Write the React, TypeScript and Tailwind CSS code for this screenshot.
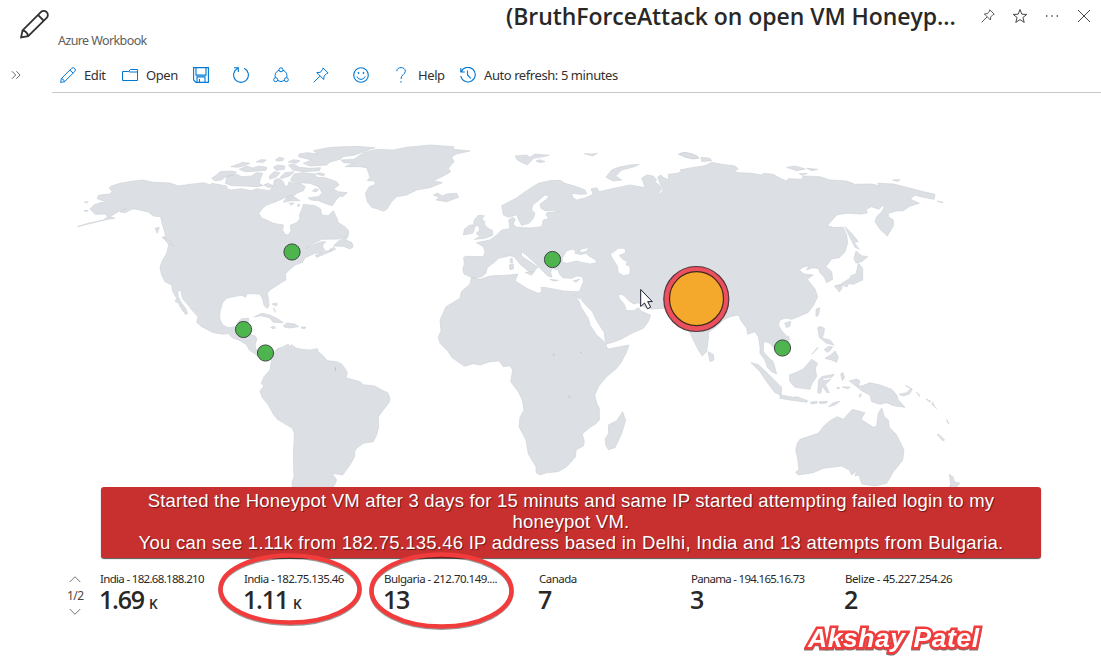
import type { ReactNode } from "react";

type Section = [number, number, string];

/** Joins coastline sections, each given in the local units of its map sheet. */
function coast(...sections: Section[]): string {
  const points = sections.flatMap(([dx, dy, text]) =>
    text
      .trim()
      .split(/\s+/)
      .map((pair) => {
        const [x, y] = pair.split(",").map(Number);
        return `${x + dx},${y + dy}`;
      }),
  );
  return `M${points.join("L")}Z`;
}

const sheet = (dx: number, dy: number, ...shapes: string[]) =>
  shapes.map((s) => coast([dx, dy, s])).join("");

const AMERICAS = coast(
  [210, 420, "22,260 50,251 100,240 112,231 108,222 75,223 60,207 72,195 90,188 112,187 82,176 85,166 118,162 127,156 118,145 122,139 150,130 190,123 218,120 250,127 300,129 325,138 360,133 400,128 420,134 425,130 470,138 472,147 485,150 515,146 545,152 560,146 598,152 610,137 613,120 627,115 640,125 645,140 655,135 657,125 668,130 690,130 706,140 700,152 680,160 662,178 650,170 640,175 618,185 590,195 576,207 567,220 575,235 590,240 610,250 640,255 638,270 645,283 655,285 663,272 661,256 680,248 690,235 688,225 697,205 700,193 735,197 752,207 755,225 775,227 790,212 803,240 805,248 825,260 836,272 835,285 805,297 755,298 735,308 708,325 750,306 768,305 760,312 758,320 765,333 787,332 765,342 740,352 736,346 755,338 735,340 705,353 698,367 675,375 658,390 646,402 648,420 640,424 600,450 592,460 596,480 597,500 590,505 582,495 577,475 570,463 550,461 530,462 527,472 515,466 490,470 470,475 458,488 450,515 449,535 458,555 475,563 500,560 505,545 515,536 537,535 535,545 530,580 555,588 560,595"],
  [720, 960, "50,60 45,75 48,88 56,96 75,94 103,98 112,86 130,80 145,72 148,80 155,74 168,84 185,88 210,90 232,86 235,95 250,108 262,122 290,125 305,132 318,150 322,160 318,173 335,178 360,185 370,194 405,198 425,210 443,218 450,235 447,248 430,270 415,290 416,320 410,345 400,365 370,370 350,385 344,395 344,410 330,435 308,465 276,460 290,480 285,493 265,520 240,560 180,640 160,520 156,490 162,470 160,410 163,340 157,325 112,298 100,283 85,255 65,230 60,212 72,198 64,190 72,170 90,150 94,125 94,115 80,108 65,110 50,106 40,98 28,90 20,75 5,65"],
  [210, 420, "510,602 485,592 475,580 460,583 430,578 395,560 380,547 384,530 370,515 350,490 337,475 333,452 323,452 325,470 335,490 347,505 353,520 347,524 330,500 326,490 315,484 320,475 308,455 305,435 285,425 275,405 270,385 275,365 290,340 296,315 290,303 278,293 287,288 280,262 276,250 272,230 250,228 235,216 195,207 185,208 165,218 150,216 170,204 145,215 120,230 135,235 112,238"],
);

const OLD_WORLD = coast(
  [1290, 420, "103,403 98,390 103,372 101,352 108,349 160,350 165,335 160,320 140,308 160,304 180,300 200,285 215,270 240,266 236,240 248,232 256,238 250,252 260,262 300,264 335,260 340,240 357,236 348,225 352,217 388,215 370,211 345,212 333,205 330,192 345,182 358,168 345,165 325,182 308,195 305,210 315,220 310,235 297,250 275,256 266,240 260,224 235,232 220,225 215,197 235,187 258,175 290,152 325,130 360,122 390,121 405,130 440,140 465,150 470,162 450,163 425,160 428,172 440,180 465,174 490,163 483,147 500,143 508,155 530,150 560,143 600,135 645,143 640,127 635,115 650,105 670,108 680,120 675,125 690,137 695,148 686,158 690,161 700,150 690,130 683,112 692,105 700,112 715,120 715,103 742,100 758,92"],
  [2040, 420, "0,90 30,84 75,77 95,67 125,73 165,78 175,87 160,95 180,98 215,100 245,105 250,100 280,103 300,115 320,123 325,116 365,118 370,108 420,110 450,120 500,123 525,133 575,132 600,138 593,130 640,132 700,147 730,155 765,163 762,178 730,172 705,166 690,177 718,190 690,198 670,212 650,213 625,220 625,230 640,240 640,258 622,288 600,268 585,245 590,230 605,215 612,203 608,195 597,208 575,200 558,208 562,219 545,222 500,220 470,225 455,242 442,257 460,262 490,262 500,285 503,310 495,335 478,353 455,357 438,380 455,395 458,418 440,428 433,412 420,398 415,385 395,384 380,390 386,377 368,382 358,390 372,402 400,405 382,418 405,447 413,470 400,497 385,517 355,530 335,538 318,534 300,540 295,555 305,572 322,590"],
  [2040, 900, "326,107 328,125 310,150 285,148 270,130 252,124 250,140 250,155 268,175 280,185 290,222 275,215 262,202 255,180 240,160 240,140 235,110 225,95 203,103 200,85 185,65 175,45 150,50 130,60 115,75 85,97 85,115 80,155 67,168 55,150 40,120 30,98 20,80 0,60"],
  [1290, 420, "745,525 700,505 665,507 640,500 625,488 612,492 600,485 580,465 565,463 568,475 582,492 590,512 612,512 625,503 637,515 662,525 655,545 640,565 605,580"],
  [1290, 900, "575,117 545,128 530,131 525,120 523,98 500,62 487,35 465,13"],
  [1290, 420, "455,480 456,468 449,478 434,465 447,485 455,505 475,535"],
  [1290, 900, "480,75 500,105 530,132 528,138 535,147 597,135 590,155 575,185 560,205 530,230 507,257 494,285 500,310 508,325 508,360 497,372 480,382 457,402 463,425 460,438 438,450 437,470 410,500 385,515 350,518 330,525 318,518 318,500 295,462 288,420 267,380 270,352 282,330 277,300 265,275 242,245 248,210 240,197 220,200 207,183 180,185 150,195 130,191 103,199 65,172 55,155 30,130 25,112 33,92 30,60 48,20"],
  [1290, 420, "65,490 90,475 94,455 120,432 124,412 150,418 180,408 240,405 264,402 255,422 290,445 325,460 335,455 333,442 350,443 400,453 448,455 460,425 458,410 440,408 425,415 398,413 388,402 385,390 365,385 362,398 366,412 352,407 335,390 322,375 285,342 274,335 275,348 295,362 325,382 318,386 312,397 297,395 270,372 252,350 240,347 205,355 195,365 172,383 168,400 155,410 130,414"],
);

const INLAND_WATER = sheet(
  1290,
  420,
  "396,366 398,352 410,332 425,328 437,331 435,340 452,344 468,340 480,350 497,360 500,368 480,372 460,368 440,363 410,370",
  "446,330 476,322 470,334 455,337",
  "541,343 565,325 585,325 587,338 568,346 578,358 592,365 588,375 600,378 600,403 580,407 565,398 562,378 550,360",
);

const ISLANDS = [
  sheet(
    210,
    420,
    "425,115 440,105 450,95 480,93 500,96 490,105 465,112 455,120 435,122",
    "466,130 472,108 500,103 515,110 545,108 560,98 578,100 572,115 567,130 580,137 560,140 520,138 485,137",
    "483,80 505,72 517,67 540,70 525,76 505,82",
    "508,88 530,78 548,84 568,78 590,82 588,91 550,94 525,95",
    "558,66 572,59 589,60 580,67",
    "610,82 622,75 645,78 643,88 618,91",
    "616,60 627,52 642,55 638,62 622,63",
    "598,108 612,95 630,98 620,110 600,118",
    "582,135 595,130 610,138 597,143",
    "630,112 645,98 672,95 660,107 635,116",
    "656,75 670,72 688,82 720,85 752,83 748,92 700,95 668,90",
    "655,66 670,59 690,62 678,70",
    "662,118 672,102 700,98 735,102 740,112 765,113 800,125 807,135 790,147 805,155 832,158 818,170 810,168 798,180 787,197 770,192 745,182 722,180 715,173 745,170 757,158 745,140 720,130 690,128 665,125",
    "737,101 750,98 764,102 760,108",
    "640,187 650,172 660,166 678,174 690,182 665,182",
    "657,190 672,189 665,195",
    "682,194 690,193 685,201",
    "727,153 735,146 746,149 738,156",
    "790,318 805,304 822,292 835,288 827,300 845,307 850,320 840,327 820,319",
    "778,329 792,322 797,328 780,334",
    "276,291 295,298 312,318 295,310",
    "255,265 268,262 262,280",
    "43,186 55,185 50,189",
    "42,211 55,212 48,215",
    "552,531 575,520 600,525 625,538 640,548 610,547 598,533 572,527",
    "640,558 650,549 675,552 686,560 660,564 645,562",
    "602,562 610,559 617,564 608,566",
    "694,561 708,561 704,566 695,565",
    "606,492 620,489 622,494 618,498",
    "610,504 614,508 616,517",
  ),
  sheet(
    690,
    420,
    "205,50 208,42 230,38 265,42 250,32 300,22 380,19 435,23 400,35 375,45 340,50 330,58 300,66 290,75 240,78 220,70 245,60 225,55",
    "333,60 372,58 400,38 440,28 490,30 530,22 600,15 672,20 670,28 720,33 680,42 665,50 672,65 655,85 662,95 640,108 610,122 637,128 600,143 560,150 530,165 500,170 485,185 470,208 460,214 445,208 425,202 412,185 406,160 418,140 437,133 432,122 412,122 420,112 410,83 390,80 345,80 370,70 340,68",
    "610,165 623,159 637,168 650,162 680,160 686,172 650,185 618,180 628,172",
  ),
  sheet(
    1290,
    420,
    "100,285 103,268 118,256 130,254 134,265 128,280",
    "133,240 145,226 163,227 155,238 165,245 163,252 172,263 188,272 188,286 165,295 133,298 150,290 138,280 148,272 148,262 140,255 135,262 131,250",
    "255,48 290,45 300,52 315,42 358,46 330,52 310,55 293,74 280,70 262,60",
    "318,63 330,59 345,65 330,68",
    "463,41 485,42 502,40 488,48",
    "528,112 545,90 565,82 600,75 628,73 610,81 575,90 557,108 575,120 550,123",
    "744,43 765,37 790,43 805,52 785,56",
    "240,358 247,355 247,369 241,368",
    "238,375 250,372 250,387 240,389",
    "285,397 310,396 305,406",
    "360,418 385,421 370,423",
    "430,422 449,418 438,427",
  ),
  sheet(
    2040,
    420,
    "0,40 15,37 50,47 57,55 40,57 10,50",
    "63,52 90,55 95,62 65,65",
    "320,82 345,78 376,87 350,92",
    "380,85 413,88 395,92",
    "358,101 382,100 367,106",
    "638,120 660,119 653,124",
    "772,183 790,187 780,187",
    "495,260 515,280 535,305 522,307 538,328 525,322 510,292",
    "528,333 545,347 563,350 545,365 528,369 522,356",
    "535,370 548,385 548,420 520,433 500,430 488,438 475,438 488,428 510,415 513,407 528,402",
    "463,438 480,434 487,443 478,456 472,448",
    "492,438 505,432 502,440",
    "408,508 419,503 416,525 408,530",
  ),
  sheet(
    2040,
    900,
    "84,155 100,163 102,180 90,185",
    "314,70 332,64 330,78 320,83",
    "213,188 235,194 265,222 305,262 303,285 285,278 260,245 240,215",
    "300,284 340,292 350,290 383,302 380,307 330,300 300,295",
    "390,307 410,304 412,309 395,312",
    "417,305 443,304 440,309 420,311",
    "445,320 460,308 480,304 465,315",
    "328,225 345,219 370,207 395,178 413,190 406,205 410,230 395,252 390,268 345,262 330,245",
    "413,278 416,240 425,230 463,223 455,232 428,235 430,243 452,238 436,254 448,278 440,277 427,258 422,280",
    "413,83 420,79 433,85 432,100 426,115 450,120 462,135 440,130 418,112",
    "433,148 445,140 458,140 450,152 440,157",
    "435,175 452,165 465,153 475,170 470,187 455,180",
    "395,163 413,142 412,147",
    "482,222 488,217 494,232 487,242",
    "470,262 480,264 473,267",
    "487,261 510,261 505,266",
    "508,243 530,237 540,243 535,258 548,257 570,248 600,255 635,268 650,285 655,300 675,322 640,317 620,308 600,313 575,305 570,285 545,272 520,252",
    "537,285 544,282 540,292",
    "657,283 680,278 690,268 697,268 688,282 670,288",
    "676,257 685,260 696,268",
    "709,277 718,284 718,289",
    "738,297 752,303 750,307",
    "758,306 763,318 756,315",
    "763,320 770,325",
    "800,358 807,372 802,367",
    "771,403 778,404 794,420 788,422",
    "352,430 360,418 415,400 430,380 450,362 472,350 490,358 517,328 555,338 543,358 580,382 590,378 595,340 605,324 613,350 625,360 628,382 650,405 672,450 668,480 655,497 640,515 620,550 585,558 545,552 537,525 525,528 530,512 515,525 508,510 485,498 430,505 400,518 355,525 347,517 357,508 352,470 347,450",
    "808,523 820,532 823,545 840,550 830,560 815,580 790,600 812,552",
  ),
  coast([1290, 900, "578,335 587,362 575,400 555,443 535,449 527,435 526,415 536,400 535,375 560,362"]),
].join("");

const PINS = [
  { x: 292, y: 252 },
  { x: 243.5, y: 329.5 },
  { x: 265.5, y: 353 },
  { x: 552.5, y: 259.5 },
  { x: 782.5, y: 348 },
];

function WorldMap() {
  return (
    <svg className="block h-[470px] w-[1101px]" viewBox="0 93 1101 470">
      <g transform="scale(0.33333)" strokeWidth="2" strokeLinejoin="round">
        <path d={AMERICAS + OLD_WORLD + ISLANDS} fill="#dcdfe4" stroke="#cfd3d8" />
        <path d={INLAND_WATER} fill="#fff" stroke="#cfd3d8" />
        <path d="M1658,1063l6,3M1741,1055l2,5M1706,1187l4,6M1006,1102v10" stroke="#b9bdc3" strokeWidth="3" />
      </g>
      {PINS.map((p) => (
        <circle key={p.x} cx={p.x} cy={p.y} r="8.1" fill="#44b144" fillOpacity=".94" stroke="#3d4a42" strokeWidth="1" />
      ))}
      <circle cx="696.3" cy="299" r="32.5" fill="#ec4f5e" stroke="#54383c" strokeWidth="1.2" />
      <circle cx="696.5" cy="298.7" r="27" fill="#f5a92c" stroke="#3e2a1a" strokeWidth="1.2" />
      <path d="M640.7 289.5v17l3.8-3.5 3 5.8 3.2-1.600-3-5.600h4.600z" fill="#fff" stroke="#1c1c2a" strokeWidth="1" />
    </svg>
  );
}

function Icon({ children, className = "size-4" }: { children: ReactNode; className?: string }) {
  return (
    <svg viewBox="0 0 16 16" fill="none" stroke="currentColor" strokeWidth="1" className={`shrink-0 ${className}`}>
      {children}
    </svg>
  );
}

const pencil = (
  <path d="M.6 15.400l.8-3.900L11.500 1.400a2.250 2.250 0 0 1 3.200 3.200L4.500 14.700zM1.400 11.500q2.600.6 3.100 3.200M9.900 3l3.200 3.200" />
);
const pushpin = <path d="M10 .9l5.100 5.100-1.300.4-2.700 2.700-.4 3.400-6.900-6.900 3.600-.3L9.700 2.400zM6.900 9.100L.7 15.300" />;

function Toolbar() {
  return (
    <div className="flex h-[37px] items-center text-[13px] tracking-[-0.42px] text-[#323130] [&>span]:pt-0.5 [&_svg]:text-[#0078d4]">
      <Icon>{pencil}</Icon>
      <span className="ml-2 w-[38px] whitespace-nowrap">Edit</span>
      <Icon>
        <path d="M.5 4.500h6l2-2h7v11H.5zM6.500 4.500l1.500.5h7.500" />
      </Icon>
      <span className="ml-2 w-[47px] whitespace-nowrap">Open</span>
      <div className="flex gap-6">
        <Icon>
          <path d="M.6.6h14.800v14.800H3L.6 13zM3 .6v7.500h10V.6M4 15.400v-5.500h8v5.500M6.500 12v3" strokeWidth="1.100" />
        </Icon>
        <Icon>
          <path d="M11.200 1.300A7.400 7.400 0 1 1 4.800 1.300M1 .8h4.300V5" strokeWidth="1.100" />
        </Icon>
        <Icon>
          <circle cx="8" cy="2.800" r="2" />
          <circle cx="2.700" cy="12.700" r="2" />
          <circle cx="13.300" cy="12.700" r="2" />
          <path d="M6 3.300a5.800 5.800 0 0 0-3.700 7.300M10 3.300a5.800 5.800 0 0 1 3.700 7.300M4.700 13.500a6 6 0 0 0 6.600 0" />
        </Icon>
        <Icon>{pushpin}</Icon>
        <Icon>
          <circle cx="8" cy="8" r="7.300" strokeWidth="1.100" />
          <path d="M4 9.500a4.200 4.200 0 0 0 8 0" />
          <circle cx="5.500" cy="6" r=".6" fill="currentColor" />
          <circle cx="10.500" cy="6" r=".6" fill="currentColor" />
        </Icon>
        <Icon>
          <path d="M3.800 4.200C3.900 1.800 5.600.6 8 .6s4.300 1.300 4.300 3.600C12.300 7.500 8 7.600 8 12M8 14v1.600" />
        </Icon>
      </div>
      <span className="ml-[9px] w-[42px] whitespace-nowrap">Help</span>
      <Icon>
        <path d="M1.300 4.700A7.300 7.300 0 1 1 .8 9M.8 1v4h4M7.500 3.500V8l3.300 3.300" strokeWidth="1.100" />
      </Icon>
      <span className="ml-2 whitespace-nowrap">Auto refresh: 5 minutes</span>
    </div>
  );
}

const STATS = [
  { label: "India - 182.68.188.210", value: "1.69", unit: "K", width: "w-36", spacing: "tracking-[-0.68px]" },
  { label: "India - 182.75.135.46", value: "1.11", unit: "K", width: "w-[140px]", spacing: "tracking-[-0.6px]" },
  { label: "Bulgaria - 212.70.149....", value: "13", width: "w-[155px]", spacing: "tracking-[-0.52px]" },
  { label: "Canada", value: "7", width: "w-[152px]", spacing: "tracking-[-0.5px]" },
  { label: "Panama - 194.165.16.73", value: "3", width: "w-[154px]", spacing: "tracking-[-0.7px]" },
  { label: "Belize - 45.227.254.26", value: "2", width: "w-[150px]", spacing: "tracking-[-0.42px]" },
];

export default function App() {
  return (
    <div className="relative flex h-[672px] w-[1101px] flex-col overflow-hidden bg-white font-['Noto_Sans','Open_Sans',sans-serif] text-[#292827]">
      <header className="flex h-14 shrink-0">
        <Icon className="ml-5 mt-[9px] h-[30px] w-[29px] text-[#323130]">{pencil}</Icon>
        <p className="ml-[9px] mt-8 w-[448px] text-[12.5px] leading-[18px] tracking-[-0.6px] text-[#605e5c]">Azure Workbook</p>
        <h1 className="w-[474px] whitespace-nowrap font-['Open_Sans',sans-serif] text-[23px] font-semibold leading-8 tracking-[-0.06px]">
          (BruthForceAttack on open VM Honeyp...
        </h1>
        <div className="mt-2 flex h-4 gap-4 text-[#484644]">
          <Icon className="h-4 w-4 p-px">{pushpin}</Icon>
          <Icon>
            <path d="M8 1.500l1.800 4.700 5 .2-3.900 3.100 1.300 4.900L8 11.600l-4.200 2.800 1.300-4.900-3.900-3.100 5-.2z" />
          </Icon>
          <Icon>
            <path d="M2 8h1.400M7.300 8h1.400M12.600 8H14" strokeWidth="1.400" />
          </Icon>
          <Icon>
            <path d="M2 2l12 12M14 2L2 14" />
          </Icon>
        </div>
      </header>
      <div className="flex h-[37px] shrink-0">
        <div className="flex w-[52px] items-center pl-[11px] text-[#605e5c]">
          <Icon className="size-[10px]">
            <path d="M1.500 2l6 6-6 6M8.500 2l6 6-6 6" strokeWidth="1.500" />
          </Icon>
        </div>
        <div className="h-[37px] flex-1 border-b border-[#c8c8c8] pl-2">
          <Toolbar />
        </div>
      </div>
      <main className="h-[470px] shrink-0">
        <WorldMap />
      </main>
      <section className="flex flex-1 pl-[65px] pt-[7px]">
        <div className="flex w-[35px] flex-col pt-[3px] text-[#484644]">
          <Icon className="ml-[3px] h-3 w-[14px]">
            <path d="M1 12l7-7 7 7" />
          </Icon>
          <span className="ml-[2px] pt-px text-xs leading-5 tracking-[-0.5px]">1/2</span>
          <Icon className="ml-[3px] h-3 w-[14px]">
            <path d="M1 4l7 7 7-7" />
          </Icon>
        </div>
        {STATS.map((s) => (
          <div key={s.label} className={`${s.width} shrink-0`}>
            <div className={`whitespace-nowrap text-[11.5px] leading-[18px] ${s.spacing}`}>{s.label}</div>
            <div className="-ml-px -mt-px flex items-baseline font-['Open_Sans',sans-serif] text-[25px] font-semibold leading-6 tracking-[-1.2px]">
              {s.value}
              {s.unit && <span className="ml-[5px] text-[13.5px] font-semibold">{s.unit}</span>}
            </div>
          </div>
        ))}
      </section>
      <div className="absolute left-[101px] top-[487px] h-[71px] w-[940px] rounded-[3px] bg-[#c83030] pt-[3px] text-center font-['Liberation_Sans',sans-serif] text-[18.5px] leading-[21px] tracking-[0.22px] text-white shadow-[0_1px_1px_#555] [text-shadow:1px_1px_1px_#3009]">
        <p className="whitespace-nowrap tracking-[0.19px]">Started the Honeypot VM after 3 days for 15 minuts and same IP started attempting failed login to my</p>
        <p>honeypot VM.</p>
        <p className="whitespace-nowrap tracking-[0.25px]">You can see 1.11k from 182.75.135.46 IP address based in Delhi, India and 13 attempts from Bulgaria.</p>
      </div>
      <svg className="absolute left-[210px] top-[545px] h-[90px] w-[310px]" viewBox="210 545 310 90" fill="none" strokeWidth="4.500">
        <g stroke="#0006" transform="translate(0 1.200)">
          <ellipse cx="290" cy="589" rx="69.500" ry="33.500" />
          <ellipse cx="441.500" cy="590.500" rx="70" ry="36" />
        </g>
        <g stroke="#f23c3c">
          <ellipse cx="290" cy="589" rx="69.500" ry="33.500" />
          <ellipse cx="441.500" cy="590.500" rx="70" ry="36" />
        </g>
      </svg>
      <div className="absolute left-[808px] top-[623px] whitespace-nowrap font-['Liberation_Sans',sans-serif] text-[26.5px] font-bold italic leading-[30px] tracking-[0.55px] text-white [-webkit-text-stroke:5px_#f23c3c] [filter:drop-shadow(0_1px_0.5px_#0008)] [paint-order:stroke_fill]">
        Akshay Patel
      </div>
    </div>
  );
}
